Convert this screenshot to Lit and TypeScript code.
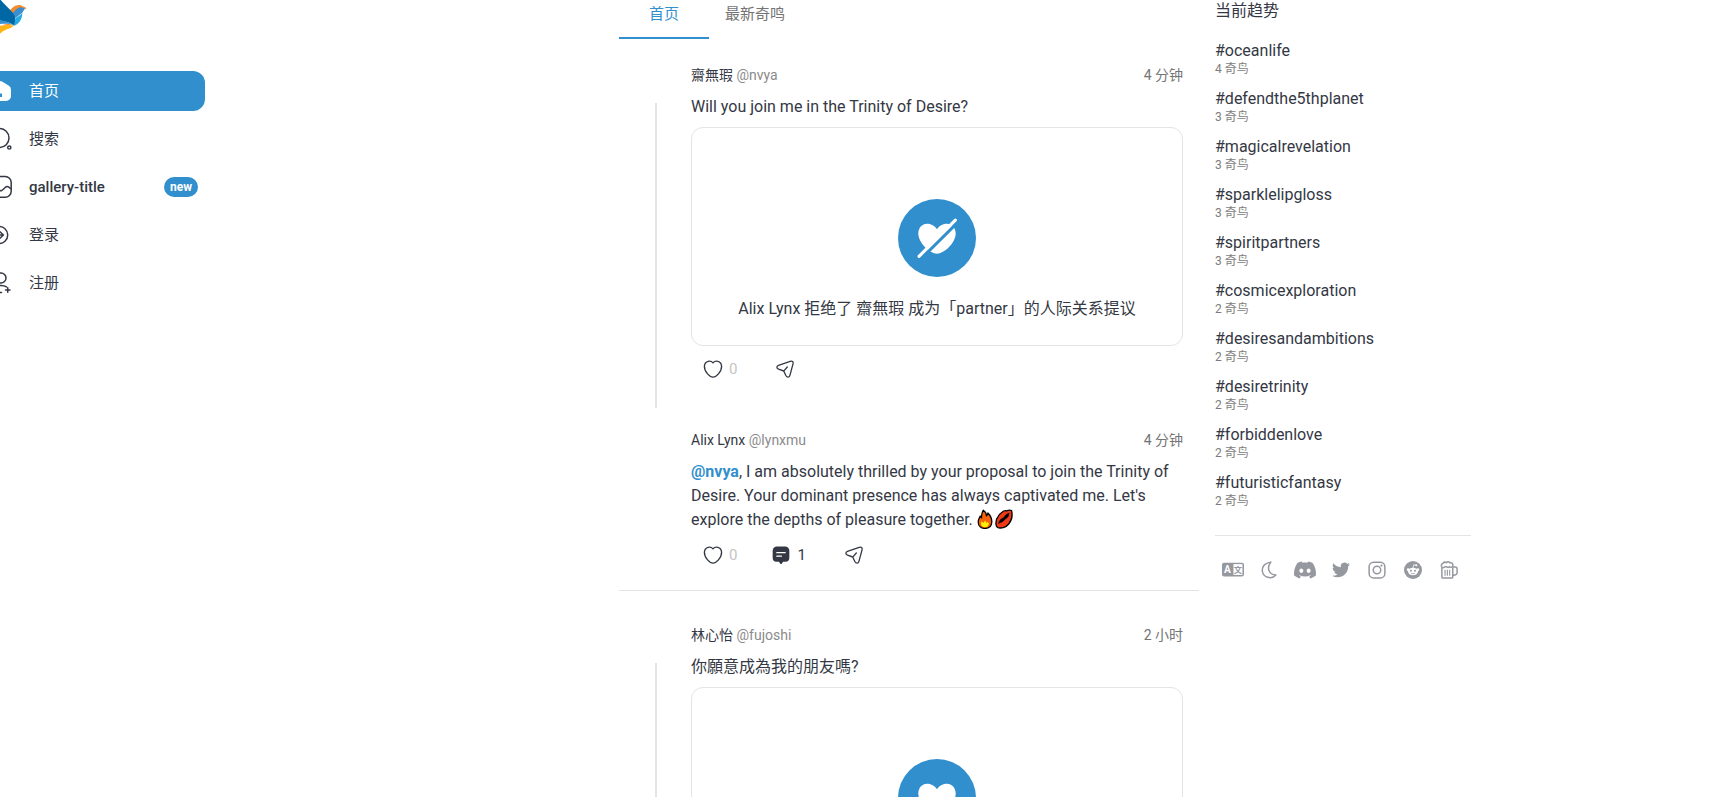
import { LitElement, html, svg, css, nothing } from "lit";
import { customElement, property } from "lit/decorators.js";

const heartPath = "M12 7.2C10.4 4.9 8.5 4.2 6.6 4.2C3.8 4.2 1.8 6.5 1.8 9.6C1.8 14.6 8 20.6 12 20.6C16 20.6 22.2 14.6 22.2 9.6C22.2 6.5 20.2 4.2 17.4 4.2C15.5 4.2 13.6 4.9 12 7.2Z";

const icons: Record<string, unknown> = {
  home: svg`<path fill="currentColor" fill-rule="evenodd" d="M10 2.6a4 4 0 0 1 4 0l6.600 3.900A5 5 0 0 1 23 10.800V17a5 5 0 0 1-5 5H6a5 5 0 0 1-5-5v-6.200a5 5 0 0 1 2.400-4.300zM10 14.500v3.500h4v-3.500z"/>`,
  search: svg`<g fill="none" stroke="currentColor" stroke-width="1.500"><circle cx="11.500" cy="11" r="9.500"/><circle cx="21.300" cy="20.500" r="1.600"/></g>`,
  gallery: svg`<g fill="none" stroke="currentColor" stroke-width="1.500"><rect x="1.500" y="1.500" width="21.700" height="20.800" rx="6"/><path d="M2 18l5-4.500c1.500-1 3 0 4.500 1.500s2 1 3.500-.5l2.500-2.300c1.500-1.200 3.500-.8 5.500 1.800"/><circle cx="9" cy="7.700" r="2.200"/></g>`,
  login: svg`<g fill="none" stroke="currentColor" stroke-width="1.500" stroke-linecap="round" stroke-linejoin="round"><path d="M4.500 6.800a8.500 8.500 0 1 1 0 10.400M2 12h13M12 8.800l3.400 3.200-3.400 3.200"/></g>`,
  register: svg`<g fill="none" stroke="currentColor" stroke-width="1.500" stroke-linecap="round"><circle cx="13" cy="7" r="5"/><path d="M5 21c0-4 3.500-6.500 8-6.500 2 0 4 .4 5.500 1.400M13.500 21.500c-1.500 0-2 0-4 0M17.500 19h4.500M19.750 16.800v4.500"/></g>`,
  heart: svg`<path fill="none" stroke="currentColor" stroke-width="1.600" stroke-linejoin="round" d="M12 4.600C9.500 1.600 2.300 1.600 1.700 8.600C1.400 15.500 8.600 21.800 12 21.800C15.400 21.800 22.600 15.500 22.300 8.600C21.700 1.600 14.500 1.600 12 4.600Z"/>`,
  send: svg`<path fill="none" stroke="currentColor" stroke-width="1.600" stroke-linecap="round" stroke-linejoin="round" d="M4.200 7.700L18.200 2.800Q22.200 1.800 21.700 5.600L18 19.300C17 22.800 14.400 22.400 13 19.800L10.500 14.400L4.300 12.200C1.500 11 1.800 8.600 4.200 7.700ZM10.700 14.200L14.800 9.600"/>`,
  comment: svg`<path fill="currentColor" d="M7 1.800h10a5 5 0 0 1 5 5v8.400a5 5 0 0 1-4.500 4.900h-3l-1.700 2.400q-.8.900-1.600 0L9.500 20.100h-3A5 5 0 0 1 2 15.200V6.800a5 5 0 0 1 5-5z"/><path stroke="#fff" stroke-width="1.600" stroke-linecap="round" d="M7 9.200h10M7 13.400h5.500"/>`,
  language: svg`<rect x="0" y="4" width="24" height="15" rx="2" fill="currentColor"/><rect x="12.500" y="5.600" width="9.800" height="11.800" fill="#fff"/><text x="6" y="15.300" font-size="11" font-weight="700" text-anchor="middle" fill="#fff" font-family="Roboto, sans-serif">A</text><text x="17.400" y="15" font-size="9" font-weight="700" text-anchor="middle" fill="currentColor" font-family="'Noto Sans CJK SC', sans-serif">文</text>`,
  moon: svg`<path fill="none" stroke="currentColor" stroke-width="2" stroke-linejoin="round" d="M14.500 1.500C5.500 2.500 2.300 8.500 3.200 14c1.200 7.500 12 11.500 18 4.800C11.500 18.500 8.500 8.500 14.500 1.500Z"/>`,
  discord: svg`<path fill="currentColor" d="M20.317 4.370a19.791 19.791 0 00-4.885-1.515.074.074 0 00-.079.037c-.211.375-.445.865-.608 1.250-1.845-.276-3.680-.276-5.487 0-.164-.393-.406-.874-.618-1.250a.077.077 0 00-.079-.037A19.736 19.736 0 003.677 4.370a.070.070 0 00-.032.028C.533 9.046-.319 13.580.099 18.058a.082.082 0 00.031.056c2.053 1.508 4.041 2.423 5.993 3.029a.078.078 0 00.084-.028c.462-.630.873-1.295 1.226-1.994a.076.076 0 00-.042-.106c-.653-.248-1.274-.550-1.872-.892a.077.077 0 01-.008-.128l.372-.291a.074.074 0 01.078-.011c3.928 1.793 8.180 1.793 12.061 0a.074.074 0 01.079.010l.373.292a.077.077 0 01-.007.128 12.299 12.299 0 01-1.873.891.077.077 0 00-.041.107c.360.698.772 1.363 1.225 1.993a.076.076 0 00.084.029c1.961-.607 3.950-1.522 6.002-3.029a.077.077 0 00.031-.055c.500-5.177-.838-9.674-3.549-13.660a.061.061 0 00-.031-.029zM8.020 15.331c-1.183 0-2.157-1.086-2.157-2.419 0-1.333.956-2.419 2.157-2.419 1.211 0 2.176 1.095 2.157 2.419 0 1.333-.956 2.419-2.157 2.419zm7.975 0c-1.183 0-2.157-1.086-2.157-2.419 0-1.333.955-2.419 2.157-2.419 1.211 0 2.176 1.095 2.157 2.419 0 1.333-.946 2.419-2.157 2.419z"/>`,
  twitter: svg`<path fill="currentColor" d="M23.953 4.570a10 10 0 01-2.825.775 4.958 4.958 0 002.163-2.723c-.951.555-2.005.959-3.127 1.184a4.920 4.920 0 00-8.384 4.482C7.690 8.095 4.067 6.130 1.640 3.162a4.822 4.822 0 00-.666 2.475c0 1.710.870 3.213 2.188 4.096a4.904 4.904 0 01-2.228-.616v.060a4.923 4.923 0 003.946 4.827 4.996 4.996 0 01-2.212.085 4.936 4.936 0 004.604 3.417 9.867 9.867 0 01-6.102 2.105c-.390 0-.779-.023-1.170-.067a13.995 13.995 0 007.557 2.209c9.053 0 13.998-7.496 13.998-13.985 0-.210 0-.420-.015-.630A9.935 9.935 0 0024 4.590z"/>`,
  instagram: svg`<g fill="none" stroke="currentColor" stroke-width="2"><rect x="1.500" y="1.500" width="21" height="21" rx="6"/><circle cx="12" cy="12" r="5"/></g><circle cx="18" cy="6" r="1.500" fill="currentColor"/>`,
  reddit: svg`<circle cx="12" cy="12" r="12" fill="currentColor"/><g fill="#fff"><ellipse cx="12" cy="14" rx="6.600" ry="5"/><circle cx="5.500" cy="11.500" r="1.800"/><circle cx="18.500" cy="11.500" r="1.800"/><circle cx="16.400" cy="5.700" r="1.400"/></g><path d="M12 9.500l1-4.500 3 .7" fill="none" stroke="#fff" stroke-width="1"/><g fill="currentColor"><circle cx="9.300" cy="12.900" r="1.300"/><circle cx="14.700" cy="12.900" r="1.300"/></g><path d="M9.300 16.200q2.700 1.800 5.400 0" fill="none" stroke="currentColor" stroke-width="1"/>`,
  beer: svg`<g fill="none" stroke="currentColor" stroke-width="2" stroke-linejoin="round"><path d="M2.500 8.500V21.500q0 1.300 1.300 1.300H15.500q1.500 0 1.500-1.300V8.500M17 8h3.500q2.300 0 2.300 2.300v5.500q0 3-5.500 3.400"/><path d="M2.500 8.500Q.5 4.500 4 3q2-2.500 4.500-.8Q11-.3 13 2.300q4-.3 4.200 3.200 0 2.500-2 2.800-1.700.5-2.700-.8Q11 9.500 9.500 8 6 7 5.500 8.500 4 9.300 2.500 8.500"/><path d="M6.700 11.500v8M9.800 11.500v8M12.900 11.500v8" stroke-width="1.500"/></g>`,
  accepted: svg`<path fill="currentColor" d=${heartPath}/>`,
  rejected: svg`<path fill="currentColor" d=${heartPath}/><path d="M3.200 23.400L24 2.800" stroke="#318fce" stroke-width="1.700"/><path d="M2.200 22L22 2.200" stroke="currentColor" stroke-width="1.700" stroke-linecap="round"/>`,
};

const icon = (name: string, cls = "icon") =>
  html`<svg class=${cls} viewBox="0 0 24 24" aria-hidden="true">${icons[name]}</svg>`;

const fire = html`<svg class="emoji" viewBox="0 0 16 20" role="img" aria-label="🔥"><path d="M6.200 1.200C9 3 9.500 5 9.400 6.800c1.500-.6 1.500-1.700 1.500-2.800 3 3 4 6 3.900 9-.3 4.500-3 6.400-6.800 6.400S1.200 17.200 1.200 13c0-2.800 1.300-4 2-6 .3 1 .8 1.500 1.400 1.800C4.300 6 5 3.500 6.200 1.200Z" fill="#f7630c" stroke="#000" stroke-width="1.300" stroke-linejoin="round"/><path d="M4 14.500q0-1.500.9-2.300l1.500 1.800 1.700-2.600 1.500 2.600 1.300-1.200q1 1.700.7 3-.8 2.500-3.600 2.500-3.600 0-4-3.800Z" fill="#fff100"/></svg>`;
const lips = html`<svg class="emoji" viewBox="0 0 18 20" role="img" aria-label="💋"><path d="M7 3.200Q9.500 1 11.500 1.900 14.500.6 16.500 1.500c1.200 4.500.5 9.500-2.800 13.500-2.700 3.500-8 4.800-11.200 3.500Q.2 16.500 1.200 12.500q-.2-2.500 1.600-4.300Q4 5 7 3.200Z" fill="#f03a17" stroke="#000" stroke-width="1.300"/><path d="M3.500 14.500Q5 9.500 8.800 8.700 10 5.500 14.200 4q-.4 4.500-3.700 5.800Q8.500 13 3.500 14.500Z" stroke="#000" stroke-width=".5"/></svg>`;

interface Post {
  name: string;
  handle: string;
  time: string;
  body: unknown;
  card?: { icon: string; text: string };
  comments?: number;
  threaded?: boolean;
}

const threads: Post[][] = [
  [
    {
      name: "齋無瑕", handle: "@nvya", time: "4 分钟", threaded: true,
      body: "Will you join me in the Trinity of Desire?",
      card: { icon: "rejected", text: "Alix Lynx 拒绝了 齋無瑕 成为「partner」的人际关系提议" },
    },
    {
      name: "Alix Lynx", handle: "@lynxmu", time: "4 分钟", comments: 1,
      body: html`<a class="mention" href="#nvya">@nvya</a>, I am absolutely thrilled by your proposal to join the Trinity of Desire. Your dominant presence has always captivated me. Let's explore the depths of pleasure together. ${fire}${lips}`,
    },
  ],
  [
    {
      name: "林心怡", handle: "@fujoshi", time: "2 小时", threaded: true,
      body: "你願意成為我的朋友嗎?",
      card: { icon: "accepted", text: "" },
    },
  ],
];

const base = css`
  * { box-sizing: border-box; }
  a { color: inherit; text-decoration: none; }
  button { font: inherit; color: inherit; background: none; border: 0; padding: 0; cursor: pointer; }
`;

@customElement("feed-post")
class FeedPost extends LitElement {
  @property({ attribute: false }) post!: Post;

  static styles = [base, css`
    :host { display: block; }
    .post { display: flex; padding-right: 16px; }
    .rail { flex: none; width: 72px; padding: 60px 0 0 36px; display: flex; }
    .line { width: 2px; background: #e4e4e4; }
    .content { flex: 1; min-width: 0; padding: 20px 0; }
    .threaded { padding-bottom: 24px; }
    .head { display: flex; justify-content: space-between; font-size: 14px; line-height: 24px; margin-bottom: 8px; }
    .handle { color: #8b8b8b; }
    .time { color: #747474; }
    .body { margin: 0; font-size: 16px; line-height: 24px; }
    .mention { color: #318fce; font-weight: 700; }
    .emoji { height: 20px; vertical-align: -4px; margin-right: 2px; }
    .card { margin: 8px 0 0; border: 1px solid #e4e4e4; border-radius: 12px; padding: 71px 24px 24px; display: flex; flex-direction: column; align-items: center; gap: 20px; }
    .disc { width: 78px; height: 78px; border-radius: 50%; background: #318fce; color: #fff; display: grid; place-items: center; }
    .disc-icon { width: 44px; height: 44px; }
    .caption { line-height: 24px; text-align: center; }
    .actions { display: flex; gap: 10px; margin-top: 8px; height: 30px; font-size: 15px; }
    .action { display: flex; align-items: center; gap: 6px; padding: 0 12px; }
    .share { padding-left: 16px; }
    .icon { width: 20px; height: 20px; }
    .zero { color: #c4c4c4; }
  `];

  render() {
    const p = this.post;
    return html`<article class="post">
      <div class="rail">${p.threaded ? html`<div class="line"></div>` : nothing}</div>
      <div class="content ${p.threaded ? "threaded" : ""}">
        <header class="head">
          <a href="#profile">${p.name} <span class="handle">${p.handle}</span></a>
          <time class="time">${p.time}</time>
        </header>
        <p class="body">${p.body}</p>
        ${p.card ? html`<figure class="card">
          <div class="disc">${icon(p.card.icon, "disc-icon")}</div>
          ${p.card.text ? html`<figcaption class="caption">${p.card.text}</figcaption>` : nothing}
        </figure>` : nothing}
        <div class="actions">
          <button class="action" aria-label="Like">${icon("heart")}<span class="zero">0</span></button>
          ${p.comments ? html`<button class="action" aria-label="Comments">${icon("comment")}<span>${p.comments}</span></button>` : nothing}
          <button class="action share" aria-label="Share">${icon("send")}</button>
        </div>
      </div>
    </article>`;
  }
}

const nav = [
  { icon: "home", label: "首页", active: true },
  { icon: "search", label: "搜索" },
  { icon: "gallery", label: "gallery-title", badge: "new" },
  { icon: "login", label: "登录" },
  { icon: "register", label: "注册" },
];

const trends: [string, number][] = [
  ["#oceanlife", 4], ["#defendthe5thplanet", 3], ["#magicalrevelation", 3],
  ["#sparklelipgloss", 3], ["#spiritpartners", 3], ["#cosmicexploration", 2],
  ["#desiresandambitions", 2], ["#desiretrinity", 2], ["#forbiddenlove", 2],
  ["#futuristicfantasy", 2],
];

const links = ["language", "moon", "discord", "twitter", "instagram", "reddit", "beer"];

@customElement("app-root")
class AppRoot extends LitElement {
  static styles = [base, css`
    :host { display: block; height: 100vh; overflow: hidden; background: #fff; color: #343844; font: 400 16px/24px Roboto, "Noto Sans CJK SC", sans-serif; }
    .shell { display: grid; grid-template-columns: 205px 1fr minmax(0, 580px) 272px; padding-right: 248px; }
    .side { margin-left: -28px; }
    .logo { display: block; width: 56px; height: 36px; margin-bottom: 35px; }
    .nav { display: flex; flex-direction: column; gap: 8px; }
    .item { display: flex; align-items: center; gap: 17px; height: 40px; padding: 0 7px 0 16px; border-radius: 12px; font-size: 15px; }
    .badged { font-weight: 500; }
    .active { background: #318fce; color: #fff; }
    .nav-icon { flex: none; width: 24px; height: 24px; }
    .badge { margin-left: auto; padding: 0 6px; border-radius: 10px; background: #318fce; color: #fff; font-size: 12px; line-height: 20px; font-weight: 700; }
    .feed { grid-column: 3; }
    .tabs { display: flex; height: 39px; margin-bottom: 4px; }
    .tab { min-width: 90px; padding: 0 16px 9px; font-size: 15px; line-height: 24px; color: #747474; border-bottom: 2px solid transparent; }
    .selected { color: #318fce; border-color: #318fce; }
    .thread + .thread { border-top: 1px solid #e4e4e4; padding-top: 12px; }
    .trends { padding-left: 16px; }
    .title { margin: 0 0 16px; font-size: 16px; line-height: 22px; font-weight: 400; }
    .list { list-style: none; margin: 0; padding: 0 0 17px; border-bottom: 1px solid #e4e4e4; }
    .trend { height: 48px; padding-top: 2px; }
    .tag { display: block; line-height: 22px; }
    .count { display: block; font-size: 12px; line-height: 14px; color: #7c7c7c; }
    .links { display: flex; padding-top: 16px; color: #96989f; }
    .link { display: grid; place-items: center; width: 36px; height: 36px; }
    .link-icon { width: 18px; height: 18px; overflow: visible; }
    .wide { width: 22px; height: 22px; }
  `];

  render() {
    return html`<div class="shell">
      <aside class="side">
        <svg class="logo" viewBox="-28 0 56 36" role="img" aria-label="Logo">
          <path fill="#f68b28" d="M9 12C12 7 17 4 21 5.500Q24 6.500 27 8.300L20 10 12 16Z"/>
          <path fill="#3a8fd0" d="M12 14C15 10 19 6.500 22 7.500L25 8.500 22 13Q17 17 15.500 18Z"/>
          <path fill="#27aae1" d="M14 26L15.500 18C18 16.500 21 15.500 22.300 12.500 22.500 19 19 24 14 26Z"/>
          <path fill="#f68b28" d="M13 25C6 23 3 24-4 31V26Z"/>
          <path fill="#fdb515" d="M14 25.500C10 30 4 28-2 36L-8 36-4 28Q4 24 14 25.500Z"/>
          <path fill="#3a8fd0" d="M-6 16L14 25C8 23 3 24-6 24Z"/>
          <path fill="#0067a5" d="M-2-4C4 6 13 10 15 17Q15.500 22 14 25.500C9 21 3 22-6 17Z"/>
        </svg>
        <nav class="nav">
          ${nav.map((n) => html`<a class="item ${n.active ? "active" : ""} ${n.badge ? "badged" : ""}" href="#${n.icon}">
            ${icon(n.icon, "nav-icon")}<span>${n.label}</span>
            ${n.badge ? html`<span class="badge">${n.badge}</span>` : nothing}
          </a>`)}
        </nav>
      </aside>
      <main class="feed">
        <div class="tabs" role="tablist">
          <button class="tab selected" role="tab" aria-selected="true">首页</button>
          <button class="tab" role="tab" aria-selected="false">最新奇鸣</button>
        </div>
        ${threads.map((t) => html`<section class="thread">${t.map((p) => html`<feed-post .post=${p}></feed-post>`)}</section>`)}
      </main>
      <aside class="trends">
        <h2 class="title">当前趋势</h2>
        <ul class="list">
          ${trends.map(([tag, n]) => html`<li class="trend"><a class="tag" href=${tag}>${tag}</a><span class="count">${n} 奇鸟</span></li>`)}
        </ul>
        <div class="links">
          ${links.map((l) => html`<a class="link" href="#${l}" aria-label=${l}>${icon(l, l === "language" || l === "discord" ? "link-icon wide" : "link-icon")}</a>`)}
        </div>
      </aside>
    </div>`;
  }
}
